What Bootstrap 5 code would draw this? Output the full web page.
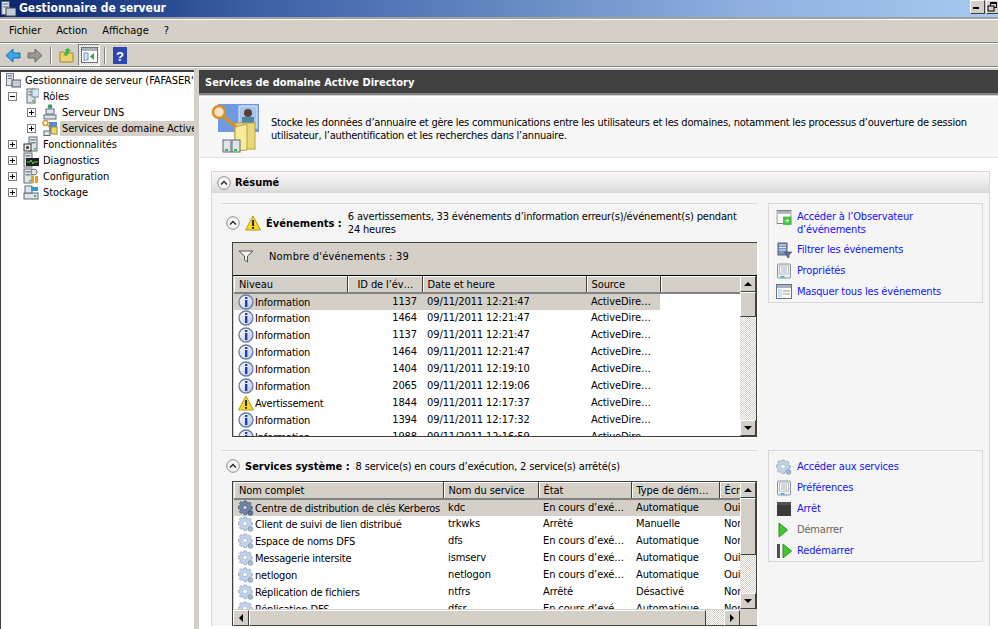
<!DOCTYPE html>
<html lang="fr"><head><meta charset="utf-8"><title>Gestionnaire de serveur</title>
<link rel="stylesheet" href="https://cdn.jsdelivr.net/npm/bootstrap@5.3.0/dist/css/bootstrap.min.css">
<style>
html,body{height:629px;overflow:hidden;background:#d4d0c8}
body,.wnd{font-family:"DejaVu Sans Condensed","DejaVu Sans",sans-serif;font-size:11px;line-height:13px;color:#000}
svg{display:block;flex:none}
.wnd{width:998px;height:629px}
.tbar{height:17px;background:linear-gradient(90deg,#0a246a 0,#3a5fa5 25%,#8fb0e0 75%,#a6caf0 100%);color:#fff;font-weight:700;font-size:12px;padding-left:1px}
.tbar svg{margin-right:3px}
.wbtn{width:15px;height:14px;background:#d4d0c8;border:1px solid;border-color:#fff #404040 #404040 #fff;margin-right:1px;margin-top:-2px}
.wbtns{margin-left:auto;margin-right:-4px;align-self:flex-start;padding-top:2px}
.mbar{height:26px;background:#d4d0c8;border-top:2px solid #a0a0a0;border-bottom:1px solid #808080;box-shadow:inset 0 1px 0 #fff;padding-left:9px}
.mbar span{margin-right:15px}
.tools{height:24px;background:#d4d0c8;border-top:1px solid #fff;border-bottom:1px solid #808080;padding-left:5px}
.g4{margin-left:4px}.g6{margin-left:6px}.g7{margin-left:7px}
.tsep{width:2px;height:17px;border-left:1px solid #808080;border-right:1px solid #fff}
.tpress{width:22px;height:22px;border:1px solid;border-color:#808080 #fff #fff #808080;background:repeating-conic-gradient(#d4d0c8 0 25%,#fff 0 50%) 0 0/2px 2px}
.gapline{height:3px;background:#d4d0c8;border-top:1px solid #fff}
.lay{height:559px}
.tree{width:194px;background:#fff;border-top:2px solid #404040;border-left:1px solid #404040;overflow:hidden;white-space:nowrap;letter-spacing:-.08px}
.trow{height:16px}
.tbox{width:9px;height:9px;border:1px solid #808080;background:#fff;position:relative;flex:none;margin-right:6px}
.tbox:before{content:"";position:absolute;left:1px;right:1px;top:3px;height:1px;background:#000}
.tbox.pl:after{content:"";position:absolute;top:1px;bottom:1px;left:3px;width:1px;background:#000}
.ind0{padding-left:4px}.ind1{padding-left:7px}.ind2{padding-left:26px}.ind3{padding-left:7px}
.ttxt{padding:1px 2px;margin-left:2px}
.tsel{background:#d4d0c8;flex:1}
.split{width:5px;background:#d4d0c8}
.pane{flex:1;min-width:0;background:#fff}
.phead{height:23px;background:#404040;color:#fff;font-weight:700;padding:1px 0 0 6px}
.phead2{height:5px;border-top:2px solid #808080;border-bottom:2px solid #fff;background:#d4d0c8}
.desc{height:60px;background:#f7f7f7;border-bottom:1px solid #e4e2da;padding-left:12px;gap:12px;line-height:13px;letter-spacing:-.23px;white-space:nowrap}
.desc div{padding-top:2px}
.body1{padding:13px 8px 0 12px}
.sect{background:#f5f5f5;border:1px solid #d8d8d8;border-bottom:0}
.shead{height:21px;background:linear-gradient(#fdf6f6,#ebebeb 50%,#d8d8d8);font-weight:700;padding-left:5px;gap:4px}
.chev{width:14px;height:14px;flex:none}
.sinner{padding:10px 7px 0 9px}
.grp{display:flex;gap:11px}
.grp2{margin-top:13px}
.left{width:536px;flex:none}
.line1{border-top:1px solid #d8d8d8;height:1px}
.hrow{min-height:38px;padding-left:5px;gap:5px}
.hrow2{min-height:30px}
.hlabel{font-weight:700;white-space:nowrap}
.htext{margin-left:1px;letter-spacing:-.17px}
.list{margin-left:11px;width:525px;border:1px solid #404040;border-right:0;background:#d4d0c8;box-shadow:2px 2px 0 #fffdf8}
.filt{height:33px;padding:0 0 5px 5px;gap:15px;border-bottom:1px solid #000;letter-spacing:.2px}
.lmain{display:flex;background:#fff;border-left:1px solid #d4d0c8}
.gridbox{flex:1;min-width:0;overflow:hidden;position:relative}
.gb1{height:160px}
.gb2{height:127px}
.gt{table-layout:fixed;margin:0;border-collapse:collapse;width:506px;--bs-table-bg:transparent;--bs-table-color:#000;color:#000;font-size:11px;letter-spacing:-.1px}
.gt th,.gt td{padding:0 3px 0 5px;border:0;white-space:nowrap;overflow:hidden;font-weight:400;height:17px;line-height:15px;box-shadow:none}
.gt th{background:#d4d0c8;border-right:1px solid #404040;border-bottom:2px solid #808080;padding-top:1px;box-shadow:inset 1px 1px 0 #fff}
.gt tr.on td{background:#d4d0c8}
.gt th.idh{padding-left:10px}
.num{text-align:right;padding-right:5px!important}
.cell{display:flex;align-items:center;gap:1px;letter-spacing:-.2px}
.cell svg{margin-left:-1px}
.vs{width:17px;flex:none;background:repeating-conic-gradient(#d4d0c8 0 25%,#fff 0 50%) 0 0/2px 2px;display:flex;flex-direction:column;border-right:1px solid #404040}
.sb{background:#d4d0c8;border:1px solid;border-color:#fff #404040 #404040 #fff;height:16px;display:flex;align-items:center;justify-content:center;flex:none}
.thumb{height:25px}
.thumb2{height:57px}
.arr{width:0;height:0;border-left:4px solid transparent;border-right:4px solid transparent}
.au{border-bottom:4px solid #000}.ad{border-top:4px solid #000}
.al{border:4px solid transparent;border-right:4px solid #000;border-left:0}.ar{border:4px solid transparent;border-left:4px solid #000;border-right:0}
.hs{height:16px;display:flex;background:repeating-conic-gradient(#d4d0c8 0 25%,#fff 0 50%) 0 0/2px 2px;border-top:1px solid #d4d0c8;margin-right:17px}
.hs .sb{width:16px}
.hs .hthumb{width:457px}
.sfill{flex:1}
.acts{width:215px;flex:none;border:1px solid #d8d8d8;padding:5px 7px 4px;height:100px;letter-spacing:-.17px}
.acts2{height:112px}
.act{color:#1414ff;text-decoration:none;display:flex;align-items:center;gap:5px;height:21px}
.act.two{height:30px;align-items:flex-start;padding-top:1px}
.act.dim{color:#6b665c}
.act:hover{color:#1414ff}
</style></head>
<body>
<svg width="0" height="0" class="position-absolute">
<defs>
<linearGradient id="gi" x1="0" y1="0" x2="1" y2="1"><stop offset="0" stop-color="#fff"/><stop offset="1" stop-color="#b8c4dc"/></linearGradient>
<symbol id="info" viewBox="0 0 16 16"><circle cx="8" cy="8" r="7" fill="url(#gi)" stroke="#6a7ca0" stroke-width="1.3"/><rect x="7" y="3" width="2.4" height="2" fill="#1a3fc0"/><rect x="7" y="6" width="2.4" height="7" fill="#1a3fc0"/></symbol>
<symbol id="warn" viewBox="0 0 16 16"><path d="M8 1 15.5 15H.5z" fill="#f8d820" stroke="#a08810" stroke-width=".8" stroke-linejoin="round"/><rect x="7.1" y="5" width="1.9" height="6" fill="#222"/><rect x="7.1" y="12" width="1.9" height="1.8" fill="#222"/></symbol>
<symbol id="gear" viewBox="0 0 16 16"><path d="M6 1h2.400l.4 1.600 1.200.5L11.500 2l1.600 1.700-1 1.400.5 1.200 1.700.3v2.400l-1.700.4-.5 1.100 1 1.500-1.600 1.600-1.500-1-1.200.5-.3 1.500H6l-.4-1.600-1.100-.5-1.500 1-1.600-1.600 1-1.500-.5-1.200L.3 8.500V6.100l1.600-.3.5-1.200-1-1.400L3 1.600l1.400 1 1.200-.5z" fill="#c4d4e8" stroke="#93a6c0" stroke-width=".8"/><circle cx="7" cy="7.500" r="2.300" fill="#fff" stroke="#a0b2ca" stroke-width=".8"/><circle cx="12.500" cy="13" r="2.400" fill="#a9bbd2" stroke="#7f93ad" stroke-width=".7"/></symbol>
<symbol id="gearon" viewBox="0 0 16 16"><path d="M6 1h2.400l.4 1.600 1.200.5L11.500 2l1.600 1.700-1 1.400.5 1.200 1.700.3v2.400l-1.700.4-.5 1.100 1 1.500-1.600 1.600-1.500-1-1.200.5-.3 1.500H6l-.4-1.600-1.100-.5-1.500 1-1.600-1.600 1-1.500-.5-1.200L.3 8.500V6.100l1.600-.3.5-1.200-1-1.400L3 1.600l1.400 1 1.200-.5z" fill="#6f87ad" stroke="#46597a" stroke-width=".8"/><circle cx="7" cy="7.500" r="2.300" fill="#d4d0c8" stroke="#46597a" stroke-width=".8"/><circle cx="12.500" cy="13" r="2.400" fill="#5f7699" stroke="#3e506e" stroke-width=".7"/></symbol>
<symbol id="chev" viewBox="0 0 14 14"><circle cx="7" cy="7" r="6.300" fill="#f4f4f4" stroke="#8a8a8a"/><path d="M4 8.500 7 5.500l3 3" fill="none" stroke="#222" stroke-width="1.300"/></symbol>
<symbol id="srv" viewBox="0 0 16 16"><rect x="4" y="1" width="8" height="14" fill="#dfe4ea" stroke="#5e6a78"/><rect x="5.500" y="3" width="5" height="1.500" fill="#7c8896"/><rect x="5.500" y="6" width="5" height="1.500" fill="#7c8896"/><rect x="9" y="12" width="2" height="1.500" fill="#2fc23a"/></symbol>
<symbol id="prop" viewBox="0 0 15 16"><rect x="1" y="1" width="13" height="14" rx="1" fill="#eef0f2" stroke="#8a929c"/><rect x="3" y="3" width="9" height="8" fill="#fff" stroke="#9aa2ac" stroke-width=".7"/><path d="M4.500 5h6M4.500 7h6M4.500 9h6" stroke="#8a96b0" stroke-width=".8"/><rect x="4" y="13" width="4" height="1.500" fill="#30b0e0"/></symbol>
<symbol id="play" viewBox="0 0 10 16"><path d="M1 1 9.500 8 1 15z" fill="#43c830" stroke="#2a8f1c"/></symbol>
<symbol id="win" viewBox="0 0 16 15"><rect x=".5" y=".5" width="15" height="14" fill="#fbfbfb" stroke="#6b7380"/><rect x="1" y="1" width="14" height="3" fill="#a9b0ba"/></symbol>
</defs></svg>

<div class="wnd d-flex flex-column">
  <div class="tbar d-flex align-items-center">
    <svg width="15" height="17" viewBox="0 0 15 17"><use href="#srv" x="-3" y="0" width="15" height="16"/><rect x="5" y="8" width="10" height="8" fill="#c4ccd6" stroke="#445"/></svg>
    <span>Gestionnaire de serveur</span>
    <div class="wbtns d-flex">
      <div class="wbtn d-flex align-items-end justify-content-center pb-1"><svg width="7" height="2"><rect width="6" height="2" fill="#000"/></svg></div>
      <div class="wbtn"><svg width="12" height="12" viewBox="0 0 12 12"><rect x="3.500" y="1.500" width="6" height="5" fill="none" stroke="#000"/><rect x="3" y="1" width="7" height="2"/><rect x="1" y="5" width="6" height="5" fill="#d4d0c8" stroke="#000"/></svg></div>
    </div>
  </div>
  <nav class="mbar d-flex align-items-center">
    <span>Fichier</span><span>Action</span><span>Affichage</span><span>?</span>
  </nav>
  <div class="tools d-flex align-items-center">
    <svg width="16" height="15" viewBox="0 0 16 15"><path d="M1 7.500 8 1v4h7v5H8v4z" fill="#3fa4e8" stroke="#1470b4"/></svg>
    <svg class="g6" width="16" height="15" viewBox="0 0 16 15"><path d="M15 7.500 8 1v4H1v5h7v4z" fill="#9a9a94" stroke="#6a6a66"/></svg>
    <div class="tsep g7"></div>
    <svg class="g7" width="15" height="16" viewBox="0 0 15 16"><path d="M1 5h4l1 1h8v9H1z" fill="#f0d070" stroke="#a08838"/><path d="M4 8 7 5 6 3l3-2 3 3-2 .5L8 9z" fill="#3cb838"/></svg>
    <div class="tpress g4 d-flex align-items-center justify-content-center"><svg width="17" height="16" viewBox="0 0 17 16"><rect x=".5" y=".5" width="16" height="15" fill="#fff" stroke="#6b7380"/><rect x="1" y="1" width="15" height="3" fill="#a9b0ba"/><rect x="3" y="6" width="4" height="7" fill="#cfe4f4" stroke="#7a9ab8"/><path d="M13 6v7L9 9.500z" fill="#2fa03a"/></svg></div>
    <div class="tsep g4"></div>
    <svg class="g7" width="14" height="17" viewBox="0 0 14 17"><rect width="14" height="17" fill="#2c48b0"/><text x="7" y="13.500" text-anchor="middle" fill="#fff" font-family="Liberation Sans" font-weight="700" font-size="13">?</text></svg>
  </div>
  <div class="gapline"></div>
  <div class="lay d-flex">
    <aside class="tree">
      <div class="trow d-flex align-items-center ind0"><svg width="16" height="16" viewBox="0 0 16 16"><use href="#srv" x="-2" y="0" width="14" height="15"/><rect x="7" y="8" width="9" height="7" fill="#c4ccd6" stroke="#556"/></svg><span class="ttxt">Gestionnaire de serveur (FAFASER'</span></div>
      <div class="trow d-flex align-items-center ind1"><span class="tbox"></span><svg width="16" height="16"><use href="#srv" width="16" height="16"/><rect x="9" y="1" width="7" height="8" fill="#d8e4f4" stroke="#7a8aa0"/></svg><span class="ttxt">Rôles</span></div>
      <div class="trow d-flex align-items-center ind2"><span class="tbox pl"></span><svg width="16" height="16" viewBox="0 0 16 16"><circle cx="8" cy="2.500" r="2.300" fill="#3a9a6a"/><rect x="4" y="5" width="8" height="5" fill="#dfe4ea" stroke="#5e6a78"/><rect x="2" y="11" width="12" height="4" fill="#dfe4ea" stroke="#5e6a78"/></svg><span class="ttxt">Serveur DNS</span></div>
      <div class="trow d-flex align-items-center ind2"><span class="tbox pl"></span><svg width="16" height="16" viewBox="0 0 16 16"><circle cx="3.500" cy="3" r="2.500" fill="none" stroke="#d89a20" stroke-width="1.500"/><path d="M5 5l6 5" stroke="#d89a20" stroke-width="1.500"/><rect x="7" y="2" width="8" height="9" fill="#5b8ad8"/><rect x="9" y="7" width="6" height="7" fill="#f0d860" stroke="#a08838"/><rect x="2" y="11" width="6" height="4.500" fill="#dfe4ea" stroke="#5e6a78"/></svg><span class="ttxt tsel">Services de domaine Active</span></div>
      <div class="trow d-flex align-items-center ind3"><span class="tbox pl"></span><svg width="16" height="16" viewBox="0 0 16 16"><use href="#srv" width="16" height="16" x="2"/><rect x="1" y="8" width="7" height="7" fill="#e8e8e0" stroke="#333"/><circle cx="4.500" cy="11.500" r="1.500" fill="#333"/></svg><span class="ttxt">Fonctionnalités</span></div>
      <div class="trow d-flex align-items-center ind3"><span class="tbox pl"></span><svg width="16" height="16" viewBox="0 0 16 16"><use href="#srv" width="16" height="16" x="-3"/><rect x="3" y="6" width="13" height="8" fill="#222"/><path d="M4 10h3l1-2 2 4 1-2h4" stroke="#5fd050" fill="none"/></svg><span class="ttxt">Diagnostics</span></div>
      <div class="trow d-flex align-items-center ind3"><span class="tbox pl"></span><svg width="16" height="16" viewBox="0 0 16 16"><use href="#srv" width="16" height="16" x="-3"/><circle cx="11" cy="4" r="3" fill="#e4e4e4" stroke="#777"/><rect x="8" y="8" width="3" height="7" fill="#e8a020"/><rect x="12" y="8" width="3" height="7" fill="#e8a020"/></svg><span class="ttxt">Configuration</span></div>
      <div class="trow d-flex align-items-center ind3"><span class="tbox pl"></span><svg width="16" height="16" viewBox="0 0 16 16"><rect x="1" y="9" width="14" height="6" fill="#dfe4ea" stroke="#5e6a78"/><rect x="2" y="2" width="7" height="7" fill="#dfe4ea" stroke="#5e6a78"/><rect x="8" y="3" width="7" height="4" fill="#2f9ad8"/><rect x="11" y="11" width="2" height="2" fill="#2fc23a"/></svg><span class="ttxt">Stockage</span></div>
    </aside>
    <div class="split"></div>
    <main class="pane d-flex flex-column">
      <div class="phead d-flex align-items-center">Services de domaine Active Directory</div>
      <div class="phead2"></div>
      <div class="desc d-flex align-items-center">
        <svg width="48" height="50" viewBox="0 0 48 50"><rect x="7" y="1" width="41" height="28" fill="#6f9ae0"/><rect x="28" y="3" width="18" height="22" fill="#a8c4ee" stroke="#dfe9f8"/><circle cx="37" cy="10" r="4" fill="#5a4030"/><rect x="31" y="14" width="12" height="10" fill="#4e86a8"/><rect x="24" y="20" width="20" height="26" fill="#ead878" stroke="#b8a048"/><path d="M24 24l12-3v26l-12 1z" fill="#f6ec9c" stroke="#b8a048"/><circle cx="8" cy="9" r="6" fill="#f3e4c0" stroke="#d8902c" stroke-width="2.500"/><path d="M12 13l13 11" stroke="#d8902c" stroke-width="3"/><rect x="12" y="37" width="8" height="12" fill="#dfe4ea" stroke="#5e6a78"/><rect x="21" y="37" width="8" height="12" fill="#dfe4ea" stroke="#5e6a78"/><rect x="14" y="46" width="3" height="2" fill="#2fc23a"/><rect x="23" y="46" width="3" height="2" fill="#2fc23a"/></svg>
        <div>Stocke les données d’annuaire et gère les communications entre les utilisateurs et les domaines, notamment les processus d’ouverture de session<br>utilisateur, l’authentification et les recherches dans l’annuaire.</div>
      </div>
      <div class="body1">
        <div class="sect">
          <div class="shead d-flex align-items-center"><svg class="chev"><use href="#chev"/></svg><span>Résumé</span></div>
          <div class="sinner">
            <div class="grp">
              <div class="left">
                <div class="line1"></div>
                <div class="hrow d-flex align-items-center">
                  <svg class="chev"><use href="#chev"/></svg>
                  <svg width="16" height="16"><use href="#warn" width="16" height="16"/></svg>
                  <span class="hlabel">Événements :</span>
                  <span class="htext">6 avertissements, 33 événements d’information erreur(s)/événement(s) pendant<br>24 heures</span>
                </div>
                <div class="list">
                  <div class="filt d-flex align-items-center"><svg width="16" height="13" viewBox="0 0 16 13"><path d="M1 1h14L9.500 6v6l-3-2V6z" fill="#f4f4f4" stroke="#555"/></svg><span>Nombre d'événements : 39</span></div>
                  <div class="lmain">
                    <div class="gridbox gb1">
                      <table class="table gt">
                        <colgroup><col style="width:113px"><col style="width:75px"><col style="width:164px"><col style="width:74px"><col style="width:80px"></colgroup>
                        <thead><tr><th>Niveau</th><th class="idh">ID de l’év…</th><th>Date et heure</th><th>Source</th><th></th></tr></thead>
                        <tbody>
                          <tr class="on"><td><div class="cell"><svg width="16" height="16"><use href="#info"/></svg>Information</div></td><td class="num">1137</td><td>09/11/2011 12:21:47</td><td>ActiveDire…</td><td class="bg-white"></td></tr>
                          <tr><td><div class="cell"><svg width="16" height="16"><use href="#info"/></svg>Information</div></td><td class="num">1464</td><td>09/11/2011 12:21:47</td><td>ActiveDire…</td><td></td></tr>
                          <tr><td><div class="cell"><svg width="16" height="16"><use href="#info"/></svg>Information</div></td><td class="num">1137</td><td>09/11/2011 12:21:47</td><td>ActiveDire…</td><td></td></tr>
                          <tr><td><div class="cell"><svg width="16" height="16"><use href="#info"/></svg>Information</div></td><td class="num">1464</td><td>09/11/2011 12:21:47</td><td>ActiveDire…</td><td></td></tr>
                          <tr><td><div class="cell"><svg width="16" height="16"><use href="#info"/></svg>Information</div></td><td class="num">1404</td><td>09/11/2011 12:19:10</td><td>ActiveDire…</td><td></td></tr>
                          <tr><td><div class="cell"><svg width="16" height="16"><use href="#info"/></svg>Information</div></td><td class="num">2065</td><td>09/11/2011 12:19:06</td><td>ActiveDire…</td><td></td></tr>
                          <tr><td><div class="cell"><svg width="16" height="16"><use href="#warn"/></svg>Avertissement</div></td><td class="num">1844</td><td>09/11/2011 12:17:37</td><td>ActiveDire…</td><td></td></tr>
                          <tr><td><div class="cell"><svg width="16" height="16"><use href="#info"/></svg>Information</div></td><td class="num">1394</td><td>09/11/2011 12:17:32</td><td>ActiveDire…</td><td></td></tr>
                          <tr><td><div class="cell"><svg width="16" height="16"><use href="#info"/></svg>Information</div></td><td class="num">1988</td><td>09/11/2011 12:16:59</td><td>ActiveDire…</td><td></td></tr>
                        </tbody>
                      </table>
                    </div>
                    <div class="vs"><div class="sb"><span class="arr au"></span></div><div class="sb thumb"></div><div class="sfill"></div><div class="sb"><span class="arr ad"></span></div></div>
                  </div>
                </div>
              </div>
              <div class="acts">
                <a class="act two" href="#"><svg width="16" height="15" viewBox="0 0 16 16"><use href="#win" width="16" height="15"/><rect x="7" y="7" width="9" height="9" fill="#44c244"/><path d="M9 11.500h4m-2-2 2 2-2 2" stroke="#fff" fill="none"/></svg><span>Accéder à l’Observateur<br>d’événements</span></a>
                <a class="act" href="#"><svg width="16" height="16" viewBox="0 0 16 16"><rect x="2" y="1" width="9" height="12" fill="#7e93b8" stroke="#4e5f80"/><path d="M3 3h7M3 5.500h7M3 8h7" stroke="#dfe6f2"/><path d="M8 10h8l-3 3v3l-2-1v-2z" fill="#5f7396" stroke="#3f4f70" stroke-width=".6"/></svg><span>Filtrer les événements</span></a>
                <a class="act" href="#"><svg width="16" height="16"><use href="#prop" width="16" height="16"/></svg><span>Propriétés</span></a>
                <a class="act" href="#"><svg width="16" height="15"><use href="#win"/><rect x="2" y="5" width="4" height="8" fill="#c6e6f8"/><path d="M7 7h7M7 10h7" stroke="#999"/></svg><span>Masquer tous les événements</span></a>
              </div>
            </div>
            <div class="grp grp2">
              <div class="left">
                <div class="line1"></div>
                <div class="hrow hrow2 d-flex align-items-center">
                  <svg class="chev"><use href="#chev"/></svg>
                  <span class="hlabel">Services système :</span>
                  <span class="htext">8 service(s) en cours d’exécution, 2 service(s) arrêté(s)</span>
                </div>
                <div class="list">
                  <div class="lmain">
                    <div class="gridbox gb2">
                      <table class="table gt">
                        <colgroup><col style="width:209px"><col style="width:95px"><col style="width:93px"><col style="width:88px"><col style="width:21px"></colgroup>
                        <thead><tr><th>Nom complet</th><th>Nom du service</th><th>État</th><th>Type de dém…</th><th>Écr</th></tr></thead>
                        <tbody>
                          <tr class="on"><td><div class="cell"><svg width="16" height="16"><use href="#gearon"/></svg>Centre de distribution de clés Kerberos</div></td><td>kdc</td><td>En cours d’exé…</td><td>Automatique</td><td>Oui</td></tr>
                          <tr><td><div class="cell"><svg width="16" height="16"><use href="#gear"/></svg>Client de suivi de lien distribué</div></td><td>trkwks</td><td>Arrêté</td><td>Manuelle</td><td>Non</td></tr>
                          <tr><td><div class="cell"><svg width="16" height="16"><use href="#gear"/></svg>Espace de noms DFS</div></td><td>dfs</td><td>En cours d’exé…</td><td>Automatique</td><td>Non</td></tr>
                          <tr><td><div class="cell"><svg width="16" height="16"><use href="#gear"/></svg>Messagerie intersite</div></td><td>ismserv</td><td>En cours d’exé…</td><td>Automatique</td><td>Oui</td></tr>
                          <tr><td><div class="cell"><svg width="16" height="16"><use href="#gear"/></svg>netlogon</div></td><td>netlogon</td><td>En cours d’exé…</td><td>Automatique</td><td>Oui</td></tr>
                          <tr><td><div class="cell"><svg width="16" height="16"><use href="#gear"/></svg>Réplication de fichiers</div></td><td>ntfrs</td><td>Arrêté</td><td>Désactivé</td><td>Non</td></tr>
                          <tr><td><div class="cell"><svg width="16" height="16"><use href="#gear"/></svg>Réplication DFS</div></td><td>dfsr</td><td>En cours d’exé…</td><td>Automatique</td><td>Non</td></tr>
                        </tbody>
                      </table>
                    </div>
                    <div class="vs"><div class="sb"><span class="arr au"></span></div><div class="sb thumb2"></div><div class="sfill"></div><div class="sb"><span class="arr ad"></span></div></div>
                  </div>
                  <div class="hs"><div class="sb"><span class="al"></span></div><div class="sb hthumb"></div><div class="sfill"></div><div class="sb"><span class="ar"></span></div></div>
                </div>
              </div>
              <div class="acts acts2">
                <a class="act" href="#"><svg width="16" height="16"><use href="#gear" width="16" height="16"/></svg><span>Accéder aux services</span></a>
                <a class="act" href="#"><svg width="16" height="16"><use href="#prop" width="16" height="16"/></svg><span>Préférences</span></a>
                <a class="act" href="#"><svg width="16" height="16"><rect x="1" y="1" width="14" height="14" fill="#3c3c3c"/><rect x="1" y="1" width="14" height="3" fill="#555"/></svg><span>Arrêt</span></a>
                <a class="act dim" href="#"><svg width="16" height="16" viewBox="0 0 16 16"><use href="#play" x="2" width="10" height="16"/></svg><span>Démarrer</span></a>
                <a class="act" href="#"><svg width="16" height="16" viewBox="0 0 16 16"><rect x="1" y="1" width="3" height="14" fill="#505050"/><use href="#play" x="6" width="10" height="16"/></svg><span>Redémarrer</span></a>
              </div>
            </div>
          </div>
        </div>
      </div>
    </main>
  </div>
</div>
</body></html>
